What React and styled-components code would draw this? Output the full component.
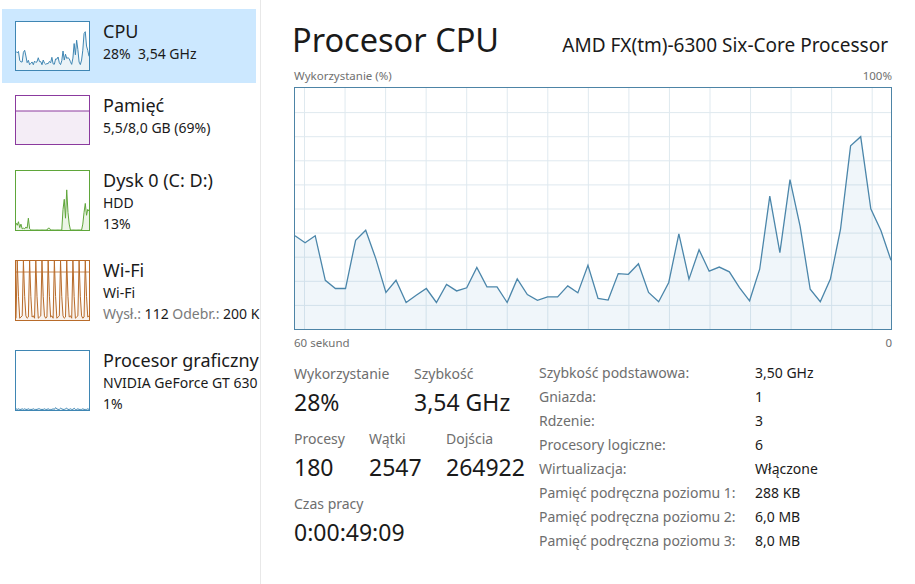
import React from 'react';
import styled, { createGlobalStyle } from 'styled-components';

const GlobalStyle = createGlobalStyle`
    html, body {
        margin: 0;
        padding: 0;
        background: #ffffff;
    }
    body {
        font-family: "Noto Sans", "Open Sans", sans-serif;
        color: #1a1a1a;
    }
`;

const cpuData = [38.7, 35.8, 38.7, 20.2, 16.8, 16.8, 36.8, 41.0, 29.2, 15.2, 20.2, 11.0, 14.0, 16.8, 11.0, 18.5, 15.8, 17.1, 25.5, 17.5,
    17.5, 11.0, 20.8, 14.3, 11.9, 13.3, 13.3, 17.9, 15.0, 26.4, 12.7, 12.0, 23.0, 22.7, 27.1, 15.2, 11.3, 19.3, 39.5, 20.7,
    32.9, 24.0, 25.7, 23.7, 17.2, 11.7, 24.8, 55.1, 31.7, 62.0, 42.7, 16.5, 11.3, 20.7, 41.3, 76.0, 79.8, 49.9, 40.9, 28.5];

const diskData = [12, 8, 14, 4, 10, 2, 3, 2, 5, 3, 20, 2, 0, 0, 0, 0, 0, 0, 0, 0,
    0, 0, 0, 0, 0, 0, 3, 3, 0, 0, 0, 0, 0, 0, 0, 0, 0, 0, 35, 52, 20, 68, 30, 10, 0, 0, 0,
    0, 0, 0, 0, 0, 0, 0, 10, 30, 45, 25, 35, 32];

const wifiData = [];
for (let i = 0; i < 60; i++) {
    wifiData.push(i % 5 === 1 ? 100 : i % 5 === 2 ? 40 : 3 + (i % 3) * 2);
}

const gpuData = [2, 1, 2, 1, 1, 2, 1, 2, 1, 1, 2, 1, 1, 1, 2, 1, 1, 1, 2, 2,
    1, 1, 1, 2, 1, 1, 2, 1, 1, 1, 2, 1, 4, 2, 1, 1, 3, 2, 1, 1,
    2, 3, 1, 1, 2, 1, 1, 3, 1, 1, 2, 1, 1, 1, 2, 1, 1, 1, 2, 1];

const toPoints = (data, w, h) =>
    data.map((v, i) => `${((i * w) / (data.length - 1)).toFixed(2)},${(h - (v / 100) * h).toFixed(2)}`).join(' ');

const Page = styled.div`
    display: flex;
    width: 915px;
    height: 584px;
    overflow: hidden;
    background: #ffffff;
`;

const Sidebar = styled.div`
    display: flex;
    flex-direction: column;
    width: 261px;
    flex-shrink: 0;
    padding-top: 9px;
    border-right: 1px solid #e8e8e8;
    overflow: hidden;
    box-sizing: border-box;
`;

const SideItem = styled.div`
    display: flex;
    align-items: flex-start;
    gap: 13px;
    margin-left: 2px;
    width: 254px;
    padding: ${(p) => (p.tall ? '13px' : '12px')} 0 ${(p) => (p.tall ? '13px' : '12px')} 13px;
    box-sizing: border-box;
    background: ${(p) => (p.active ? '#cce8ff' : 'transparent')};
`;

const Thumb = styled.div`
    width: 75px;
    height: ${(p) => (p.tall ? '61px' : '50px')};
    flex-shrink: 0;
    border: 1px solid ${(p) => p.color};
    box-sizing: border-box;
    background: #ffffff;
    display: flex;

    svg {
        width: 100%;
        height: 100%;
        display: block;
    }
`;

const SideText = styled.div`
    display: flex;
    flex-direction: column;
    white-space: nowrap;
    margin-top: -2px;
`;

const SideTitle = styled.div`
    font-size: 18px;
    line-height: 24px;
    color: #1a1a1a;
`;

const SideLine = styled.div`
    font-size: 14px;
    line-height: 21px;
    color: #1a1a1a;
`;

const Muted = styled.span`
    color: #7a7a7a;
`;

const Main = styled.div`
    flex: 1;
    display: flex;
    flex-direction: column;
    padding: 16px 23px 0 33px;
    min-width: 0;
`;

const Header = styled.div`
    display: flex;
    justify-content: space-between;
    align-items: baseline;
    margin-left: -2px;
`;

const Title = styled.h1`
    margin: 0;
    font-size: 32.5px;
    font-weight: 400;
    line-height: 48px;
    color: #1a1a1a;
`;

const Model = styled.div`
    font-size: 19px;
    color: #1a1a1a;
    margin-right: 4px;
`;

const AxisRow = styled.div`
    display: flex;
    justify-content: space-between;
    font-size: 11.5px;
    line-height: 16px;
    color: #707070;
    margin: ${(p) => p.margin};
`;

const ChartBox = styled.div`
    height: 243px;
    border: 1px solid #4d84a6;
    box-sizing: border-box;
    background: #ffffff;

    svg {
        display: block;
        width: 100%;
        height: 100%;
    }
`;

const Details = styled.div`
    display: flex;
    margin-top: 13px;
`;

const StatsColumn = styled.div`
    display: flex;
    flex-direction: column;
    width: 245px;
    flex-shrink: 0;
    gap: 8px;
`;

const StatRow = styled.div`
    display: flex;
`;

const Stat = styled.div`
    display: flex;
    flex-direction: column;
    width: ${(p) => (p.width ? `${p.width}px` : 'auto')};
`;

const StatLabel = styled.div`
    font-size: 14px;
    line-height: 20px;
    color: #6e6e6e;
`;

const StatValue = styled.div`
    font-size: 23px;
    line-height: 37px;
    color: #1a1a1a;
`;

const InfoTable = styled.div`
    display: grid;
    grid-template-columns: 216px auto;
    grid-auto-rows: 24px;
    align-items: center;
    font-size: 14px;
    margin-top: -4px;
`;

const InfoLabel = styled.div`
    color: #6e6e6e;
`;

const InfoValue = styled.div`
    color: #1a1a1a;
`;

const MiniChart = ({ data, stroke, fill, w = 73, h = 48, extra }) => (
    <svg viewBox={`0 0 ${w} ${h}`} preserveAspectRatio="none">
        {extra}
        <polygon points={`0,${h} ${toPoints(data, w, h)} ${w},${h}`} fill={fill} />
        <polyline points={toPoints(data, w, h)} fill="none" stroke={stroke} strokeWidth="1" />
    </svg>
);

const CpuChart = () => {
    const w = 596;
    const h = 241;
    const vLines = [];
    for (let k = 0; k < 15; k++) vLines.push(9.5 + k * 40.55);
    const hLines = [];
    for (let k = 1; k < 10; k++) hLines.push(k * 24.1);
    return (
        <svg viewBox={`0 0 ${w} ${h}`} preserveAspectRatio="none">
            {vLines.map((x) => (
                <line key={`v${x}`} x1={x} y1="0" x2={x} y2={h} stroke="#dfe9ef" strokeWidth="1" />
            ))}
            {hLines.map((y) => (
                <line key={`h${y}`} x1="0" y1={y + 0.5} x2={w} y2={y + 0.5} stroke="#dfe9ef" strokeWidth="1" />
            ))}
            <polygon points={`0,${h} ${toPoints(cpuData, w, h)} ${w},${h}`} fill="rgba(70,135,185,0.08)" />
            <polyline points={toPoints(cpuData, w, h)} fill="none" stroke="#4b86aa" strokeWidth="1.3" />
        </svg>
    );
};

const info = [
    ['Szybkość podstawowa:', '3,50 GHz'],
    ['Gniazda:', '1'],
    ['Rdzenie:', '3'],
    ['Procesory logiczne:', '6'],
    ['Wirtualizacja:', 'Włączone'],
    ['Pamięć podręczna poziomu 1:', '288 KB'],
    ['Pamięć podręczna poziomu 2:', '6,0 MB'],
    ['Pamięć podręczna poziomu 3:', '8,0 MB'],
];

const App = () => {
    return (
        <>
            <GlobalStyle />
            <Page>
                <Sidebar>
                    <SideItem active>
                        <Thumb color="#3f86b3">
                            <MiniChart data={cpuData} stroke="#3f86b3" fill="rgba(63,134,179,0.1)" />
                        </Thumb>
                        <SideText>
                            <SideTitle>CPU</SideTitle>
                            <SideLine>28%&nbsp; 3,54 GHz</SideLine>
                        </SideText>
                    </SideItem>
                    <SideItem>
                        <Thumb color="#8b3a9e">
                            <svg viewBox="0 0 73 48" preserveAspectRatio="none">
                                <rect x="0" y="15" width="73" height="33" fill="#f4edf6" />
                                <line x1="0" y1="15" x2="73" y2="15" stroke="#8b3a9e" strokeWidth="1.2" />
                            </svg>
                        </Thumb>
                        <SideText>
                            <SideTitle>Pamięć</SideTitle>
                            <SideLine>5,5/8,0 GB (69%)</SideLine>
                        </SideText>
                    </SideItem>
                    <SideItem tall>
                        <Thumb tall color="#5fa63a">
                            <MiniChart data={diskData} stroke="#5fa63a" fill="rgba(95,166,58,0.12)" h={59} />
                        </Thumb>
                        <SideText>
                            <SideTitle>Dysk 0 (C: D:)</SideTitle>
                            <SideLine>HDD</SideLine>
                            <SideLine>13%</SideLine>
                        </SideText>
                    </SideItem>
                    <SideItem tall>
                        <Thumb tall color="#b86b2a">
                            <MiniChart
                                data={wifiData}
                                stroke="#b86b2a"
                                fill="rgba(184,107,42,0.08)"
                                h={59}
                                extra={<line x1="0" y1="11" x2="73" y2="11" stroke="#b86b2a" strokeWidth="0.8" />}
                            />
                        </Thumb>
                        <SideText>
                            <SideTitle>Wi-Fi</SideTitle>
                            <SideLine>Wi-Fi</SideLine>
                            <SideLine>
                                <Muted>Wysł.:</Muted> 112 <Muted>Odebr.:</Muted> 200 Kb/s
                            </SideLine>
                        </SideText>
                    </SideItem>
                    <SideItem tall>
                        <Thumb tall color="#3f86b3">
                            <MiniChart data={gpuData} stroke="#3f86b3" fill="rgba(63,134,179,0.1)" h={59} />
                        </Thumb>
                        <SideText>
                            <SideTitle>Procesor graficzny 0</SideTitle>
                            <SideLine>NVIDIA GeForce GT 630</SideLine>
                            <SideLine>1%</SideLine>
                        </SideText>
                    </SideItem>
                </Sidebar>

                <Main>
                    <Header>
                        <Title>Procesor CPU</Title>
                        <Model>AMD FX(tm)-6300 Six-Core Processor</Model>
                    </Header>
                    <AxisRow margin="4px 0 3px">
                        <span>Wykorzystanie (%)</span>
                        <span>100%</span>
                    </AxisRow>
                    <ChartBox>
                        <CpuChart />
                    </ChartBox>
                    <AxisRow margin="5px 0 0">
                        <span>60 sekund</span>
                        <span>0</span>
                    </AxisRow>

                    <Details>
                        <StatsColumn>
                            <StatRow>
                                <Stat width={120}>
                                    <StatLabel>Wykorzystanie</StatLabel>
                                    <StatValue>28%</StatValue>
                                </Stat>
                                <Stat>
                                    <StatLabel>Szybkość</StatLabel>
                                    <StatValue>3,54 GHz</StatValue>
                                </Stat>
                            </StatRow>
                            <StatRow>
                                <Stat width={75}>
                                    <StatLabel>Procesy</StatLabel>
                                    <StatValue>180</StatValue>
                                </Stat>
                                <Stat width={77}>
                                    <StatLabel>Wątki</StatLabel>
                                    <StatValue>2547</StatValue>
                                </Stat>
                                <Stat>
                                    <StatLabel>Dojścia</StatLabel>
                                    <StatValue>264922</StatValue>
                                </Stat>
                            </StatRow>
                            <StatRow>
                                <Stat>
                                    <StatLabel>Czas pracy</StatLabel>
                                    <StatValue>0:00:49:09</StatValue>
                                </Stat>
                            </StatRow>
                        </StatsColumn>
                        <InfoTable>
                            {info.map(([label, value]) => (
                                <React.Fragment key={label}>
                                    <InfoLabel>{label}</InfoLabel>
                                    <InfoValue>{value}</InfoValue>
                                </React.Fragment>
                            ))}
                        </InfoTable>
                    </Details>
                </Main>
            </Page>
        </>
    );
};

export default App;
